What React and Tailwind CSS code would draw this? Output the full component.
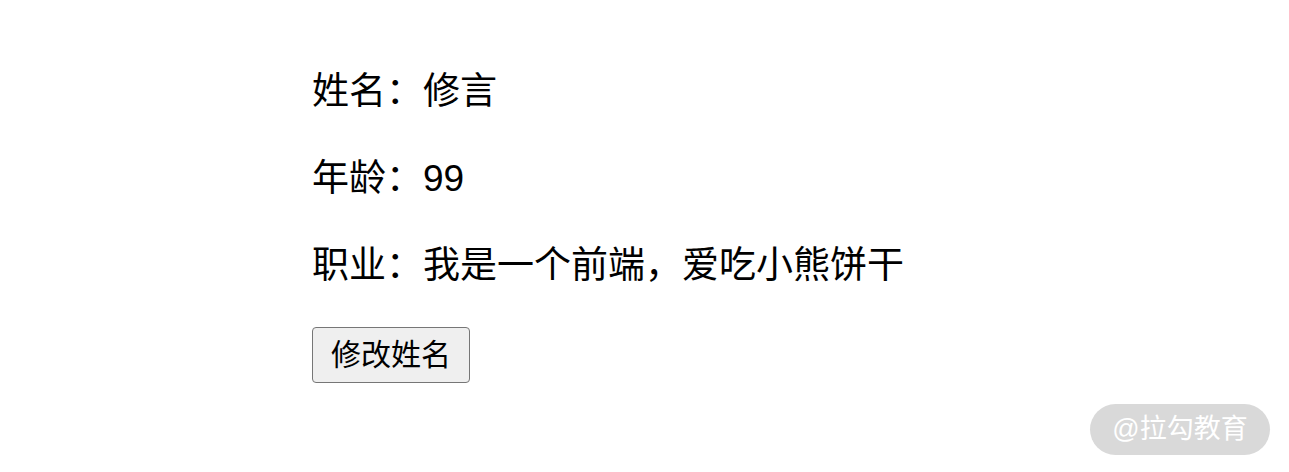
import React from 'react';

export default function App() {
  return (
    <div className="relative h-[472px] w-[1289px] overflow-hidden bg-white text-black [font-family:'Liberation_Sans','Noto_Sans_CJK_SC',sans-serif]">
      <div className="flex flex-col items-start gap-[43px] pl-[312px] pt-[70px]">
        <p className="text-[37px] leading-[44px]">姓名：修言</p>
        <p className="text-[37px] leading-[44px]">年龄：99</p>
        <p className="text-[37px] leading-[44px]">职业：我是一个前端，爱吃小熊饼干</p>
        <button className="-mt-[4px] rounded-[4px] border border-[#767676] bg-[#efefef] px-[18px] py-[9px] text-[30px] leading-[36px]">
          修改姓名
        </button>
      </div>
      <div className="absolute left-[1090px] top-[404px] flex h-[51px] w-[180px] items-center justify-center rounded-full bg-[#d9d9d9] text-[27px] text-white">
        @拉勾教育
      </div>
    </div>
  );
}
